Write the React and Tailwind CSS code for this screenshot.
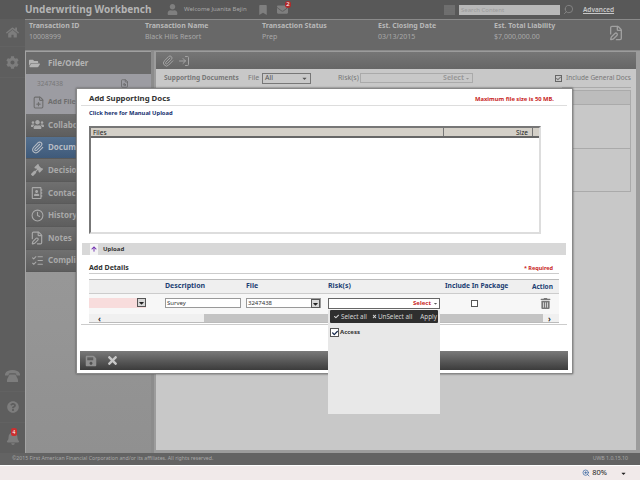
import React from "react";
import { FaHome, FaCog, FaQuestionCircle, FaBell, FaFolderOpen, FaUser, FaBookmark, FaEnvelope, FaTrashAlt, FaGavel, FaUsers, FaRegAddressBook, FaSave, FaTimes, FaCheck, FaArrowUp, FaCaretDown } from "react-icons/fa";
import { Paperclip, LogIn, Clock, FilePen, FilePlus, ListChecks, Search, FileSearch, ZoomIn } from "lucide-react";

const navItems = [
  { label: "Collaboration", icon: <FaUsers size={13} /> },
  { label: "Documents", icon: <Paperclip size={13} />, active: true },
  { label: "Decisions", icon: <FaGavel size={12} /> },
  { label: "Contacts", icon: <FaRegAddressBook size={12} /> },
  { label: "History", icon: <Clock size={13} /> },
  { label: "Notes", icon: <FilePen size={14} /> },
  { label: "Compliance", icon: <ListChecks size={13} /> },
];

const txn = [
  ["Transaction ID", "10008999", "w-[116px]"],
  ["Transaction Name", "Black Hills Resort", "w-[117px]"],
  ["Transaction Status", "Prep", "w-[116px]"],
  ["Est. Closing Date", "03/13/2015", "w-[116px]"],
  ["Est. Total Liability", "$7,000,000.00", "w-[114px]"],
];

const SelectArrow = () => (
  <span className="w-[9px] h-[9px] bg-[#d8d8d8] border border-[#555] flex items-center justify-center text-[#222]">
    <FaCaretDown size={8} />
  </span>
);

const RailIcon = ({ children, h }) => (
  <div className={`${h} flex items-center justify-center text-[#7d7d7d] border-b border-[#626262]`}>{children}</div>
);

const DeskPhone = () => (
  <svg width="15" height="12" viewBox="0 0 15 12" fill="currentColor">
    <path d="M0 4C1 1 4 0 7.5 0S14 1 15 4L15 5.5 11.5 5.5 11 3.5C9 3 6 3 4 3.5L3.5 5.5 0 5.5Z" />
    <path d="M4.5 4.5H10.5L13 9.5V12H2V9.5Z" />
  </svg>
);

const ListLines = () => (
  <svg width="11" height="10" viewBox="0 0 11 10" stroke="#858585" strokeWidth="1">
    <path d="M0 1H11M0 3H11M0 5H11M0 7H11M0 9H11" />
  </svg>
);

export default function App() {
  return (
    <div className="relative w-[640px] h-[480px] overflow-hidden flex flex-col bg-[#5c5c5c] text-[7px] whitespace-nowrap font-['Noto_Sans','Liberation_Sans',sans-serif]">
      <header className="h-[19px] shrink-0 bg-[#585858] flex items-center">
        <div className="w-[25px]"></div>
        <span className="w-[142px] text-[#b4b4b4] text-[10px] font-bold">Underwriting Workbench</span>
        <FaUser size={11} className="text-[#7f7f7f]" />
        <span className="w-[74px] text-[#a8a8a8] ml-[6px] text-[6px]">Welcome Juanita Bejin</span>
        <FaBookmark size={10} className="text-[#7f7f7f]" />
        <div className="relative ml-[9px]">
          <FaEnvelope size={11} className="text-[#7f7f7f]" />
          <span className="absolute -top-[3px] left-[8px] w-[6px] h-[7px] rounded-full bg-[#b02a2a] text-white text-[6px] leading-[7px] text-center">2</span>
        </div>
        <div className="ml-[156px]"><ListLines /></div>
        <div className="w-[101px] h-[10px] ml-[4px] bg-[#b8b8b8] text-[#9a9a9a] text-[6px] leading-[10px] px-[2px]">Search Content</div>
        <Search size={11} className="text-[#858585] ml-[3px] -scale-x-100" />
        <span className="text-[#c8c8c8] underline font-semibold text-[6.5px] ml-[9px]">Advanced</span>
      </header>

      <div className="flex-1 flex min-h-0">
        <aside className="w-[25px] shrink-0 flex flex-col bg-[#5e5e5e]">
          <RailIcon h="h-[28px]"><FaHome size={13} /></RailIcon>
          <RailIcon h="h-[31px]"><FaCog size={13} /></RailIcon>
          <div className="flex-1"></div>
          <RailIcon h="h-[31px]"><DeskPhone /></RailIcon>
          <RailIcon h="h-[31px]"><FaQuestionCircle size={12} /></RailIcon>
          <div className="relative h-[30px] flex items-center justify-center text-[#7d7d7d]">
            <FaBell size={14} />
            <span className="absolute top-[5px] left-[11px] w-[6px] h-[8px] rounded-[2px] bg-[#c93030] text-white text-[5px] leading-[8px] text-center">4</span>
          </div>
        </aside>

        <main className="flex-1 flex flex-col min-w-0">
          <div className="h-[32px] shrink-0 bg-[#686868] border-y border-[#8a8a8a] flex pl-[4px]">
            {txn.map(([k, v, w]) => (
              <div key={k} className={`${w} leading-[11px]`}>
                <div className="text-[#b8b8b8] font-bold">{k}</div>
                <div className="text-[#a8a8a8]">{v}</div>
              </div>
            ))}
            <FilePen size={16} className="text-[#a0a0a0] mt-[5px]" />
          </div>

          <div className="flex-1 flex min-h-0">
            <div className="w-[129px] shrink-0 bg-gradient-to-b from-[#a0a0a0] to-[#909090] flex flex-col pt-[1px] border-l border-[#a4a4a4] border-r-[3px] border-r-[#8c8c8c]">
              <div className="h-[22px] bg-[#6b6b6b] flex items-center pl-[3px] text-[#b4b4b4] font-bold text-[8px]">
                <FaFolderOpen size={11} className="mr-[8px]" />File/Order
              </div>
              <div className="h-[40px] bg-[#9c9ca2] text-[#777]">
                <div className="pl-[11px] pt-[5px] flex items-center text-[6.5px]">3247438<FileSearch size={9} className="ml-[57px] text-[#666]" /></div>
                <div className="pl-[6px] pt-[7px] flex items-center font-bold text-[#6e6e6e]"><FilePlus size={13} className="mr-[3px]" />Add File</div>
              </div>
              {navItems.map((n) => (
                <div key={n.label} className={`h-[22.6px] shrink-0 flex items-center overflow-hidden border-b border-[#5a5a5a] text-[8px] font-bold bg-gradient-to-b ${n.active ? "from-[#54708f] to-[#3f5a7a] text-[#b6bcc4]" : "from-[#707070] to-[#5e5e5e] text-[#a9a9a9]"}`}>
                  <span className="w-[18px] ml-[2px] flex justify-center">{n.icon}</span>
                  <span className="ml-[2px]">{n.label}</span>
                </div>
              ))}
            </div>

            <div className="flex-1 flex flex-col pl-[2px] pr-[4px] pb-[3px] pt-[1px] bg-[#9c9c9c] min-w-0">
              <div className="h-[17px] shrink-0 bg-gradient-to-b from-[#767676] to-[#666] flex items-center pl-[6px] text-[#a4a4a4] gap-[4px]">
                <Paperclip size={12} /><LogIn size={12} />
              </div>
              <div className="flex-1 bg-[#c8c8c8] pl-[8px] pr-[5px]">
                <div className="h-[18px] flex items-center text-[#777]">
                  <span className="w-[84px] font-bold text-[6.5px]">Supporting Documents</span>
                  <span className="w-[14px]">File</span>
                  <span className="w-[49px] h-[11px] bg-[#c8c8c8] border border-[#777] flex items-center justify-between px-[2px] text-[#555]">All<FaCaretDown size={7} /></span>
                  <span className="ml-[27px] w-[22px]">Risk(s)</span>
                  <span className="w-[113px] h-[10px] border border-[#aaa] text-[#999] font-bold flex items-center justify-end pr-[2px]">Select <FaCaretDown size={5} className="ml-[1px]" /></span>
                  <span className="ml-[82px] w-[7px] h-[7px] border border-[#666] flex items-center justify-center"><FaCheck size={5} /></span>
                  <span className="ml-[4px] text-[6.5px]">Include General Docs</span>
                </div>
                <div className="ml-[398px] h-px bg-[#aaa]"></div>
                <div className="ml-[398px] mt-[2px] h-[102px] border border-[#aaa] flex flex-col">
                  <div className="h-[14px] bg-[#bcbcbc] border-b border-[#aaa]"></div>
                  <div className="flex-1 border-b border-[#aaa]"></div>
                  <div className="flex-1"></div>
                </div>
              </div>
            </div>
          </div>
        </main>
      </div>

      <footer className="h-[12px] shrink-0 bg-[#636363] flex items-center justify-between pl-[12px] pr-[12px] text-[#a8a8a8] text-[5.2px]">
        <span>©2015 First American Financial Corporation and/or its affiliates. All rights reserved.</span>
        <span>UWB 1.0.15.10</span>
      </footer>
      <div className="h-[15px] shrink-0 bg-[#f1eaea] border-t border-white flex items-center justify-end pr-[13px] text-[#222] text-[7.5px]">
        <ZoomIn size={8} className="text-[#2b5c9c] mr-[2px]" />80%
        <FaCaretDown size={7} className="ml-[13px]" />
      </div>

      {/* modal */}
      <div className="absolute left-[76px] top-[88px] w-[497px] h-[286px] bg-white border border-[#888] shadow-[0_0_2px_#555] pl-[3px] pr-[4px] pt-[3px] pb-[3px] flex flex-col text-[#222]">
        <div className="mx-[1px] flex-1 flex flex-col">
          <div className="pl-[8px] pr-[13px] pt-[1px] h-[14px] flex items-center justify-between border-b border-[#ddd]">
            <span className="font-bold text-[7.8px] text-[#333]">Add Supporting Docs</span>
            <span className="font-bold text-[#c81e1e] text-[5.8px]">Maximum file size is 50 MB.</span>
          </div>
          <div className="pl-[8px] pt-[3px] font-bold text-[#14306e] text-[5.8px] leading-[9px]">Click here for Manual Upload</div>

          <div className="ml-[8px] mt-[8px] w-[452px] h-[108px] border-2 border-[#777] border-r-[#ddd] border-b-[#ddd] flex flex-col">
            <div className="h-[10px] bg-[#d4d0c8] border-b-2 border-[#666] flex leading-[9px] text-[#222] text-[6.5px]">
              <span className="flex-1 pl-[2px] border-r border-[#777]">Files</span>
              <span className="w-[89px] text-right pr-[4px] border-r border-[#777]">Size</span>
              <span className="w-[6px]"></span>
            </div>
          </div>

          <div className="mx-[1px] mt-[9px] h-[12px] bg-[#d8d8d8] flex items-center pl-[8px] font-bold text-[6px] text-[#333]">
            <span className="w-[8px] h-[11px] bg-[#f4f4f4] flex items-center justify-center mr-[5px]"><FaArrowUp size={6} className="text-[#7030b0]" /></span>Upload
          </div>

          <div className="ml-[8px] mr-[8px] mt-[8px] h-[11px] flex items-center justify-between border-b border-[#ccc]">
            <span className="font-bold text-[7px] text-[#333]">Add Details</span>
            <span className="font-bold text-[#c81e1e] text-[5.5px] pr-[6px]">* Required</span>
          </div>

          <div className="mt-[5px] ml-[8px] mr-[8px] border-y border-[#bbb]">
            <div className="h-[14px] bg-[#efefef] border-b border-[#ccc] flex items-center font-bold text-[#1d3f73] text-[7px]">
              <span className="w-[76px]"></span>
              <span className="w-[81px]">Description</span>
              <span className="w-[82px]">File</span>
              <span className="w-[117px]">Risk(s)</span>
              <span className="w-[87px] text-[6.7px]">Include In Package</span>
              <span className="w-[22px] text-[6.5px]">Action</span>
            </div>
            <div className="h-[20px] pb-[2px] bg-[#f7f7f7] flex items-center text-[6px] text-[#333]">
              <span className="w-[57px] h-[10px] bg-[#f8dcdc] flex justify-end"><SelectArrow /></span>
              <span className="w-[19px]"></span>
              <span className="w-[76px] h-[10px] border border-[#999] bg-white leading-[8px] pl-[1px]">Survey</span>
              <span className="w-[5px]"></span>
              <span className="w-[75px] h-[10px] border border-[#999] bg-white leading-[8px] pl-[1px] flex justify-between">3247438<SelectArrow /></span>
              <span className="w-[7px]"></span>
              <span className="w-[112px] h-[11px] border border-[#666] bg-white font-bold text-[#c81e1e] flex items-center justify-end pr-[1px]">Select<FaCaretDown size={5} className="ml-[2px] text-[#555]" /></span>
              <span className="w-[31px]"></span>
              <span className="w-[7px] h-[7px] border border-[#555] bg-white"></span>
              <span className="w-[62px]"></span>
              <FaTrashAlt size={11} className="text-[#777]" />
            </div>
            <div className="h-[8px] bg-[#f0f0f0] flex items-center text-[#333] font-bold">
              <span className="w-[9px] text-center text-[8px] leading-[7px] ml-[6px]">‹</span>
              <div className="ml-[100px] w-[339px] h-[8px] bg-[#c4c4c4]"></div>
              <span className="w-[9px] text-center text-[8px] leading-[7px] ml-[2px]">›</span>
            </div>
          </div>
          <div className="mt-[1px] h-px bg-[#ccc]"></div>
        </div>

        <div className="h-[19px] bg-gradient-to-b from-[#7a7a7a] to-[#3c3c3c] flex items-center pl-[5px] text-[#c8c8c8] gap-[9px]">
          <FaSave size={12} className="text-[#909090]" />
          <FaTimes size={13} />
        </div>

        {/* risk dropdown */}
        <div className="absolute left-[251px] top-[221px] w-[112px] h-[104px] bg-[#e8e8e8]">
          <div className="h-[13px] mx-[2px] bg-[#2e2e2e] rounded-[1px] flex items-center text-[6.3px] text-[#d4d4d4]">
            <FaCheck size={5} className="ml-[4px] mr-[2px]" />Select all
            <FaTimes size={5} className="ml-[5px] mr-[1px]" />UnSelect all
            <span className="ml-[8px]">Apply</span>
          </div>
          <div className="flex items-center font-bold text-[6px] text-[#333] mt-[5px] ml-[2px]">
            <span className="w-[9px] h-[9px] border border-[#555] bg-white flex items-center justify-center mr-[1px]"><FaCheck size={6} className="text-[#13264a]" /></span>
            Access
          </div>
        </div>
      </div>
    </div>
  );
}
